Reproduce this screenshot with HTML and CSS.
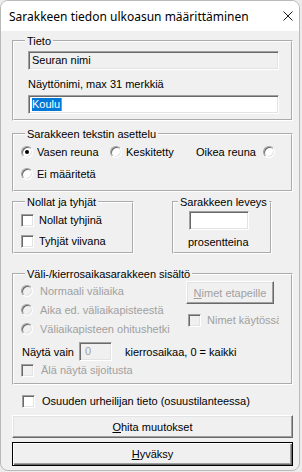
FILE: index.html
```html
<!DOCTYPE html>
<html lang="fi">
<head>
    <meta charset="UTF-8">
    <meta name="viewport" content="width=device-width, initial-scale=1.0">
    <title>Sarakkeen tiedon ulkoasun määrittäminen</title>
    <link rel="stylesheet" href="styles.css">
</head>
<body>
    <div class="window">
        <div class="titlebar">
            <span class="title">Sarakkeen tiedon ulkoasun määrittäminen</span>
            <svg class="close" width="10" height="10" viewBox="0 0 10 10">
                <path d="M0.5 0.5 L9.5 9.5 M9.5 0.5 L0.5 9.5" stroke="#1a1a1a" stroke-width="1" fill="none"/>
            </svg>
        </div>

        <div class="dialog">
            <fieldset class="group group-info">
                <legend>Tieto</legend>
                <div class="edit edit-readonly">Seuran nimi</div>
                <div class="caption">Näyttönimi, max 31 merkkiä</div>
                <div class="edit"><span class="selected">Koulu</span><span class="caret"></span></div>
            </fieldset>

            <fieldset class="group group-align">
                <legend>Sarakkeen tekstin asettelu</legend>
                <div class="align-grid">
                    <div class="option"><span class="radio checked"></span>Vasen reuna</div>
                    <div class="option"><span class="radio"></span>Keskitetty</div>
                    <div class="option option-right">Oikea reuna<span class="radio"></span></div>
                    <div class="option"><span class="radio"></span>Ei määritetä</div>
                </div>
            </fieldset>

            <div class="group-row">
                <fieldset class="group group-zeros">
                    <legend>Nollat ja tyhjät</legend>
                    <div class="option option-check"><span class="check"></span>Nollat tyhjinä</div>
                    <div class="option option-check second"><span class="check"></span>Tyhjät viivana</div>
                </fieldset>
                <fieldset class="group group-width">
                    <legend>Sarakkeen leveys</legend>
                    <div class="edit edit-width"></div>
                    <div class="caption caption-width">prosentteina</div>
                </fieldset>
            </div>

            <fieldset class="group group-split">
                <legend>Väli-/kierrosaikasarakkeen sisältö</legend>
                <div class="split-grid">
                    <div class="split-left">
                        <div class="option disabled wide"><span class="radio"></span>Normaali väliaika</div>
                        <div class="option disabled wide"><span class="radio"></span>Aika ed. väliaikapisteestä</div>
                        <div class="option disabled wide"><span class="radio"></span>Väliaikapisteen ohitushetki</div>
                    </div>
                    <div class="split-right">
                        <div class="button button-small disabled"><u>N</u>imet etapeille</div>
                        <div class="option option-check disabled names"><span class="check"></span><span class="clip">Nimet käytössä</span></div>
                    </div>
                </div>
                <div class="laps-row">
                    <span>Näytä vain</span>
                    <div class="edit edit-laps">0</div>
                    <span>kierrosaikaa, 0 = kaikki</span>
                </div>
                <div class="option option-check disabled wide"><span class="check"></span>Älä näytä sijoitusta</div>
            </fieldset>

            <div class="option option-check wide relay"><span class="check"></span>Osuuden urheilijan tieto (osuustilanteessa)</div>

            <div class="button button-cancel"><u>O</u>hita muutokset</div>
            <div class="button button-ok"><u>H</u>yväksy</div>
        </div>
    </div>
</body>
</html>
```

FILE: styles.css
```css
* {
    box-sizing: border-box;
}

body {
    margin: 0;
    background-color: #ececec;
    font-family: "Liberation Sans", Arial, sans-serif;
    font-size: 11px;
    color: #000;
}

.window {
    width: 300px;
    height: 471px;
    border: 1px solid #b9b9b9;
    border-radius: 8px;
    overflow: hidden;
    background-color: #f0f0f0;
}

.titlebar {
    height: 30px;
    background-color: #fff;
    display: flex;
    align-items: center;
    justify-content: space-between;
    padding: 0 6px 0 8px;
}

.title {
    font-family: "Noto Sans", sans-serif;
    font-size: 12px;
    color: #000;
}

.close {
    display: block;
}

.dialog {
    padding: 4px 6px 0 11px;
}

/* group boxes */
.group {
    margin: 0;
    padding: 0 7px;
    min-width: 0;
    border: 2px groove #fff;
}

.group legend {
    margin-left: 4px;
    padding: 0 2px;
    line-height: 12px;
    white-space: nowrap;
}

.group-info {
    padding-top: 4px;
    padding-bottom: 5px;
}

.group-align {
    margin-top: 7px;
    padding-top: 4px;
    padding-bottom: 8px;
}

.group-row {
    display: flex;
    gap: 38px;
    margin-top: 4px;
}

.group-zeros {
    width: 122px;
    padding-top: 4px;
    padding-bottom: 3px;
}

.group-width {
    width: 100px;
    padding: 3px 0 3px;
}

.group-split {
    margin-top: 14px;
    padding-top: 1px;
    padding-bottom: 5px;
}

/* edits */
.edit {
    height: 19px;
    width: 251px;
    margin-left: 7px;
    background-color: #fff;
    border: 1px solid;
    border-color: #a0a0a0 #fff #fff #a0a0a0;
    box-shadow: inset 1px 1px 0 #696969, inset -1px -1px 0 #e3e3e3;
    padding: 2px 3px 0;
    line-height: 13px;
    white-space: nowrap;
}

.edit-readonly {
    background-color: #f0f0f0;
}

.edit .selected {
    display: inline-block;
    background-color: #0078d7;
    color: #fff;
    padding-right: 1px;
}

.edit .caret {
    display: inline-block;
    width: 1px;
    height: 13px;
    vertical-align: top;
    background-color: #e8822a;
}

.caption {
    margin: 8px 0 4px 7px;
    line-height: 13px;
}

.edit-width {
    width: 60px;
    margin-left: 15px;
}

.caption-width {
    margin: 6px 0 0 14px;
}

.edit-laps {
    width: 33px;
    margin: 0 13px 0 5px;
    background-color: #f0f0f0;
    color: #a0a0a0;
    padding-left: 5px;
}

/* radios and checkboxes */
.option {
    display: flex;
    align-items: center;
    gap: 4px;
    height: 16px;
    white-space: nowrap;
}

.option-check {
    gap: 5px;
}

.option.wide {
    gap: 7px;
}

.radio,
.check {
    flex: none;
    display: grid;
    place-items: center;
    background-color: #fff;
    border: 1px solid;
    border-color: #a0a0a0 #fff #fff #a0a0a0;
    box-shadow: inset 1px 1px 0 #696969, inset -1px -1px 0 #e3e3e3;
}

.radio {
    width: 12px;
    height: 12px;
    border-radius: 50%;
}

.radio.checked::after {
    content: "";
    width: 4px;
    height: 4px;
    border-radius: 50%;
    background-color: #000;
}

.check {
    width: 13px;
    height: 13px;
}

.disabled {
    color: #a0a0a0;
}

.disabled .radio,
.disabled .check {
    background-color: #f0f0f0;
}

.align-grid {
    display: grid;
    grid-template-columns: 89px 86px auto;
    row-gap: 6px;
}

.option-right {
    gap: 7px;
}

.group-zeros .second {
    margin-top: 5px;
}

.split-grid {
    display: grid;
    grid-template-columns: 165px auto;
}

.split-left {
    display: flex;
    flex-direction: column;
    gap: 3px;
    padding-top: 2px;
}

.names {
    margin: 8px 0 0 2px;
    gap: 6px;
}

.names .clip {
    width: 72px;
    overflow: hidden;
}

.laps-row {
    display: flex;
    align-items: center;
    height: 19px;
    margin-top: 5px;
    padding-left: 1px;
}

.laps-row + .option {
    margin-top: 1px;
}

.relay {
    margin: 8px 0 0 10px;
    gap: 5px;
}

/* buttons */
.button {
    height: 23px;
    display: flex;
    align-items: center;
    justify-content: center;
    background-color: #f0f0f0;
    border: 1px solid;
    border-color: #fff #696969 #696969 #fff;
    box-shadow: inset -1px -1px 0 #a0a0a0, inset 1px 1px 0 #e3e3e3;
}

.button-small {
    width: 88px;
}

.button-cancel {
    margin-top: 6px;
    width: 281px;
}

.button-ok {
    margin-top: 4px;
    width: 281px;
    height: 24px;
    border-color: #000;
    box-shadow: inset 1px 1px 0 #fff, inset -1px -1px 0 #696969, inset -2px -2px 0 #a0a0a0;
}
```
